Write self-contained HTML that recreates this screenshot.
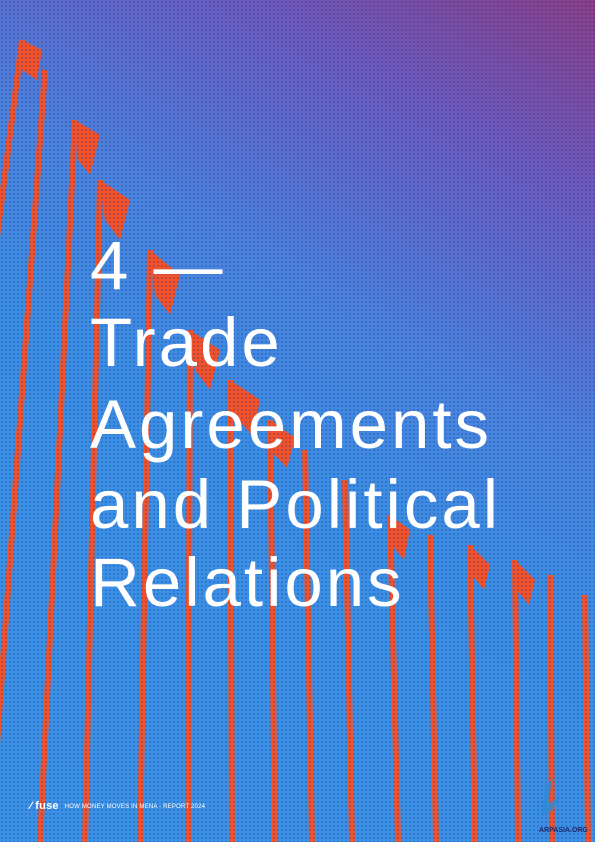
<!DOCTYPE html>
<html><head><meta charset="utf-8"><style>
html,body{margin:0;padding:0;width:595px;height:842px;overflow:hidden}
body{position:relative;background:linear-gradient(210deg,#8a3f86 0%,#6a5cc0 18%,#4a82dc 38%,#3a8fe4 55%,#3a92e6 100%);font-family:"Liberation Sans",sans-serif}
svg{position:absolute;left:0;top:0}
.t{position:absolute;left:90px;color:#fff;font-size:69px;letter-spacing:3px;line-height:80px;white-space:nowrap}
.f{position:absolute;left:30px;top:800px;color:#fff;font-size:6px;letter-spacing:.2px}
.f b{font-size:11px;margin-right:6px;vertical-align:-1px}
</style></head><body>
<svg width="595" height="842" viewBox="0 0 595 842">
<defs><pattern id="d" width="4" height="4" patternUnits="userSpaceOnUse"><circle cx="2" cy="2" r="1" fill="#1d2b8a" opacity=".35"/></pattern></defs>
<g stroke="#f2522a" stroke-width="6" fill="none">
<line x1="22" y1="40" x2="-80" y2="842"/>
<line x1="45" y1="70" x2="-10" y2="842"/>
<line x1="75" y1="120" x2="40" y2="842"/>
<line x1="100" y1="180" x2="85" y2="842"/>
<line x1="150" y1="250" x2="140" y2="842"/>
<line x1="190" y1="330" x2="188" y2="842"/>
<line x1="230" y1="380" x2="232" y2="842"/>
<line x1="270" y1="420" x2="275" y2="842"/>
<line x1="305" y1="450" x2="312" y2="842"/>
<line x1="345" y1="480" x2="352" y2="842"/>
<line x1="390" y1="515" x2="398" y2="842"/>
<line x1="430" y1="535" x2="436" y2="842"/>
<line x1="470" y1="545" x2="475" y2="842"/>
<line x1="515" y1="560" x2="518" y2="842"/>
<line x1="550" y1="575" x2="552" y2="842"/>
<line x1="585" y1="595" x2="588" y2="842"/>
</g>
<g fill="#f2522a">
<path d="M22 40 l20 10 l-5 30 l-15 -10z"/>
<path d="M75 120 l25 15 l-10 40 l-12 -15z"/>
<path d="M100 180 l30 20 l-10 40 l-15 -20z"/>
<path d="M150 250 l30 25 l-10 40 l-15 -20z"/>
<path d="M190 330 l30 20 l-10 40 l-15 -20z"/>
<path d="M230 380 l30 20 l-8 35 l-18 -20z"/>
<path d="M270 420 l25 18 l-8 30 l-14 -15z"/>
<path d="M390 515 l20 15 l-6 30 l-12 -15z"/>
<path d="M470 545 l20 20 l-6 25 l-12 -15z"/>
<path d="M515 560 l20 20 l-6 25 l-12 -15z"/>
</g>
<rect width="595" height="842" fill="url(#d)"/>
<path d="M545 785 l8 -6 l-6 25 l15 -8 l-10 15 l-10 5z" fill="#2d8ad8" opacity=".8"/>
<text x="539" y="832" font-size="7" fill="#1e2a6a" font-family="Liberation Sans" font-weight="bold">ARPASIA.ORG</text>
</svg>
<div class="t" style="top:226px">4 —</div>
<div class="t" style="top:303px">Trade</div>
<div class="t" style="top:385px">Agreements</div>
<div class="t" style="top:465px">and Political</div>
<div class="t" style="top:543px">Relations</div>
<div class="f"><b>⁄ fuse</b>HOW MONEY MOVES IN MENA - REPORT 2024</div>
</body></html>
